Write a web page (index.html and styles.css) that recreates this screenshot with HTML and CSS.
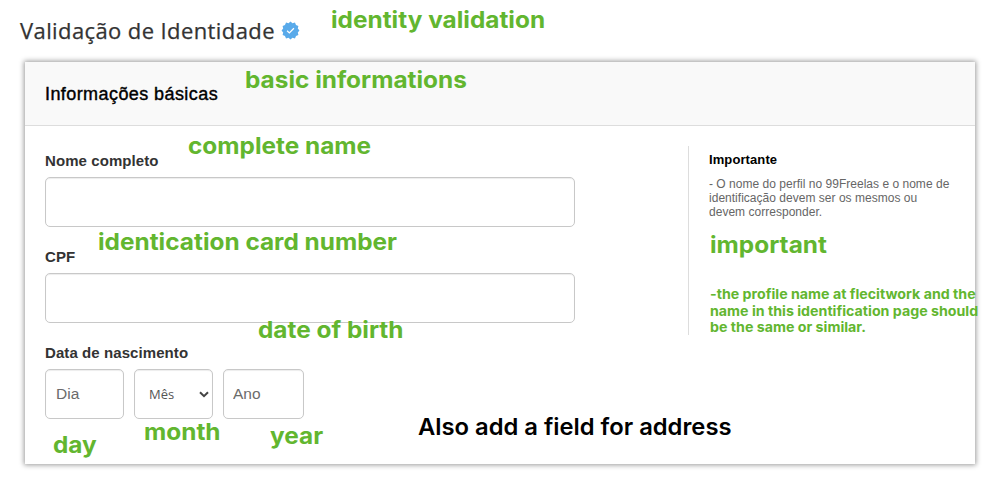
FILE: index.html
```html
<!DOCTYPE html>
<html lang="pt-BR">
<head>
<meta charset="utf-8">
<title>Validação de Identidade</title>
<link rel="stylesheet" href="styles.css">
</head>
<body>
<main class="page">
  <h1 class="title"><span>Validação de Identidade</span>
    <svg class="badge" viewBox="0 0 20 20" aria-hidden="true">
      <path fill="#59aaea" d="M10 .6 12.1 2.3 14.7 1.7 15.8 4.2 18.3 5.3 17.7 7.9 19.4 10 17.7 12.1 18.3 14.7 15.8 15.8 14.7 18.3 12.1 17.7 10 19.4 7.9 17.7 5.3 18.3 4.2 15.8 1.7 14.7 2.3 12.1.6 10 2.3 7.9 1.7 5.3 4.2 4.2 5.3 1.7 7.9 2.3Z"/>
      <path fill="none" stroke="#fff" stroke-width="1.3" d="m6.4 10.2 2.4 2.4 4.8-5"/>
    </svg>
  </h1>
  <section class="panel">
    <header class="panel-head"><h2>Informações básicas</h2></header>
    <div class="panel-body">
      <form class="form">
        <label class="label" for="nome">Nome completo</label>
        <input class="field" id="nome" type="text">
        <label class="label" for="cpf">CPF</label>
        <input class="field" id="cpf" type="text">
        <label class="label" for="dia">Data de nascimento</label>
        <div class="dates">
          <input class="field day" id="dia" type="text" placeholder="Dia">
          <div class="field select"><span>Mês</span>
            <svg class="chevron" viewBox="0 0 10 7" aria-hidden="true"><path fill="none" stroke="#444" stroke-width="2" d="m1 1.2 4 4 4-4"/></svg>
          </div>
          <input class="field year" type="text" placeholder="Ano">
        </div>
      </form>
      <aside class="aside">
        <h3>Importante</h3>
        <p>- O nome do perfil no 99Freelas e o nome de<br>identificação devem ser os mesmos ou<br>devem corresponder.</p>
      </aside>
    </div>
  </section>
  <div class="note n-title">identity validation</div>
  <div class="note n-basic">basic informations</div>
  <div class="note n-name">complete name</div>
  <div class="note n-card">identication card number</div>
  <div class="note n-birth">date of birth</div>
  <div class="note n-day">day</div>
  <div class="note n-month">month</div>
  <div class="note n-year">year</div>
  <div class="note n-important">important</div>
  <div class="note n-profile">-the profile name at flecitwork and the<br>name in this identification page should<br>be the same or similar.</div>
  <div class="note n-address">Also add a field for address</div>
</main>
</body>
</html>
```
FILE: styles.css
```css
* { box-sizing: border-box; }
body { margin: 0; background: #fff; font-family: "Liberation Sans", sans-serif; }
.page { position: relative; width: 994px; height: 484px; overflow: hidden; padding: 15px 19px 0 20px; }
.title { display: flex; align-items: center; gap: 6px; height: 30px; margin: 0 0 17px; font: 400 22px/30px "Open Sans", sans-serif; letter-spacing: 0.4px; color: #333; -webkit-text-stroke: .25px #333; white-space: nowrap; }
.badge { width: 19px; height: 19px; }
.panel { width: 950px; height: 402px; margin-left: 5px; background: #fff; box-shadow: 0 0 5px 1px rgba(0, 0, 0, .4); }
.panel-head { height: 64px; padding: 0 20px; background: #f9f9f9; border-bottom: 1px solid #ddd; }
.panel-head h2 { margin: 0; font-size: 18px; line-height: 65px; font-weight: 400; letter-spacing: .42px; color: #000; -webkit-text-stroke: .4px #000; }
.panel-body { display: flex; justify-content: space-between; padding: 20px 16px 0 20px; }
.form { width: 530px; }
.label { display: block; height: 31px; padding-top: 5px; font-size: 15px; line-height: 20px; font-weight: 700; letter-spacing: .08px; color: #333; }
.field { display: block; width: 530px; height: 50px; margin: 0 0 15px; padding: 0 10px; border: 1px solid #c8c8c8; border-radius: 5px; background: #fff; box-shadow: inset 0 1px 1px rgba(0, 0, 0, .075); font: 15.5px "Liberation Sans", sans-serif; color: #666; }
.field::placeholder { color: #6b6b6b; opacity: 1; }
.dates { display: flex; gap: 10px; }
.dates .day { width: 79px; }
.dates .year { width: 81px; padding-left: 9px; }
.dates .select { display: flex; align-items: center; justify-content: space-between; width: 79px; padding: 0 3px 0 14px; font: 13px "Open Sans", sans-serif; color: #555; }
.chevron { width: 10px; height: 7px; }
.aside { width: 271px; height: 189px; padding: 5px 0 0 20px; border-left: 1px solid #ddd; white-space: nowrap; }
.aside h3 { margin: 0 0 8px; font-size: 13px; line-height: 18px; letter-spacing: .1px; color: #000; }
.aside p { margin: 0; font-size: 12px; line-height: 14px; letter-spacing: .02px; color: #666; }
.note { position: absolute; font: 700 23px/24px Inter, sans-serif; color: #62b62f; white-space: nowrap; transform: scaleX(1.06); transform-origin: 0 0; }
.n-title { left: 331px; top: 8px; }
.n-basic { left: 245px; top: 68px; }
.n-name { left: 188px; top: 134px; }
.n-card { left: 98px; top: 230px; }
.n-birth { left: 258px; top: 318px; }
.n-day { left: 53px; top: 433px; }
.n-month { left: 144px; top: 420px; }
.n-year { left: 270px; top: 424px; }
.n-important { left: 710px; top: 233px; }
.n-profile { left: 710px; top: 286px; font-size: 13.5px; line-height: 16.5px; transform: scaleX(1.053); }
.n-address { left: 418px; top: 415px; font-weight: 600; color: #000; transform: scaleX(1.033); }
```
